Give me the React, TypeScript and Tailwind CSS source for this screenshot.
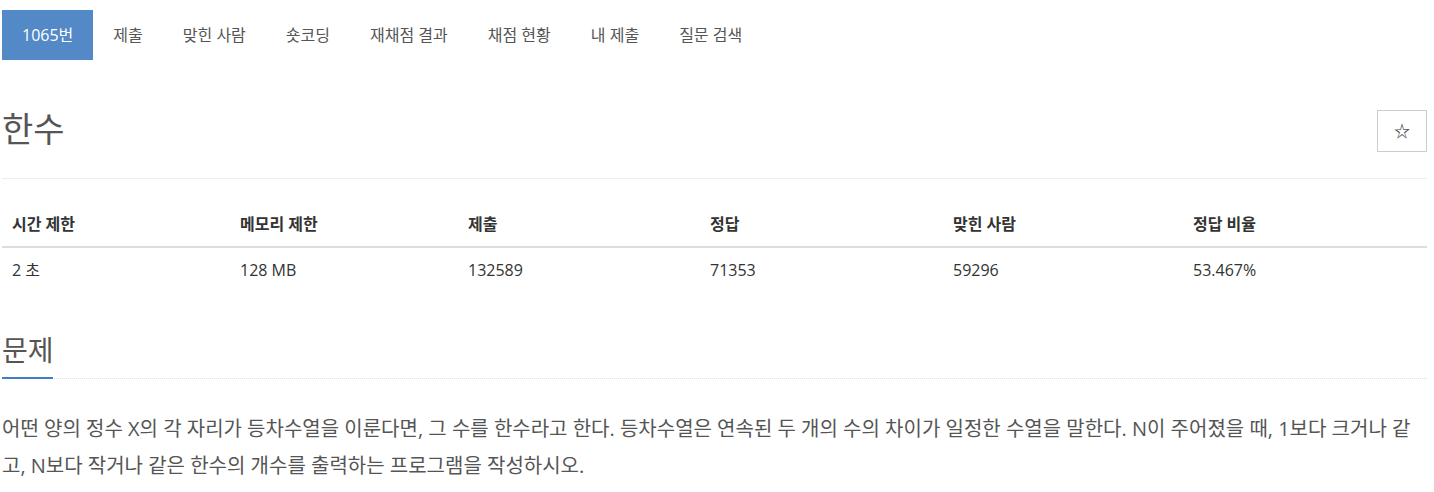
const tabs = ["제출", "맞힌 사람", "숏코딩", "재채점 결과", "채점 현황", "내 제출", "질문 검색"]

const headers = ["시간 제한", "메모리 제한", "제출", "정답", "맞힌 사람", "정답 비율"]
const values = ["2 초", "128 MB", "132589", "71353", "59296", "53.467%"]
const widths = ["w-[228px]", "w-[228px]", "w-[242px]", "w-[243px]", "w-[240px]", "flex-1"]

export default function App() {
  return (
    <div
      className="w-[1434px] h-[492px] bg-white overflow-hidden text-[#333]"
      style={{ fontFamily: '"Open Sans", "Noto Sans CJK KR", sans-serif' }}
    >
      <div className="w-[1425px] ml-[2px] pt-[10px]">
        {/* tabs */}
        <ul className="flex h-[50px] text-[16px] text-[#555]">
          <li className="h-full px-[20px] flex items-center bg-[#5289c6] text-white">1065번</li>
          {tabs.map((t) => (
            <li key={t} className="h-full px-[20px] flex items-center">
              {t}
            </li>
          ))}
        </ul>

        {/* title */}
        <div className="flex items-center justify-between mt-[50px] h-[42px]">
          <h1 className="text-[34px] font-normal text-[#555] leading-none -mt-[4px]">한수</h1>
          <button className="w-[50px] h-[42px] border border-[#ccc] flex items-center justify-center text-[#333] text-[16px]">
            ☆
          </button>
        </div>
        <div className="mt-[26px] border-t border-[#eee]" />

        {/* info table */}
        <div className="mt-[21px] text-[16px]">
          <div className="flex h-[48px] items-center border-b-2 border-[#ddd] font-bold">
            {headers.map((h, i) => (
              <div key={h} className={`${widths[i]} px-[10px] pt-[1px]`}>
                {h}
              </div>
            ))}
          </div>
          <div className="flex h-[44px] items-center">
            {values.map((v, i) => (
              <div key={i} className={`${widths[i]} px-[10px] -mt-[1px]`}>
                {v}
              </div>
            ))}
          </div>
        </div>

        {/* section */}
        <div className="mt-[44px] relative border-b border-dotted border-[#ddd]">
          <h2 className="text-[28px] font-normal text-[#555] leading-none pb-[14px]">문제</h2>
          <div className="absolute left-0 bottom-[-1px] w-[51px] h-[2px] bg-[#3e7ec1]" />
        </div>
        <p className="mt-[31px] text-[20px] leading-[37px] text-[#555] pr-[10px]">
          어떤 양의 정수 X의 각 자리가 등차수열을 이룬다면, 그 수를 한수라고 한다. 등차수열은 연속된 두 개의 수의 차이가 일정한 수열을 말한다. N이 주어졌을 때, 1보다 크거나 같고, N보다 작거나 같은 한수의 개수를 출력하는 프로그램을 작성하시오.
        </p>
      </div>
    </div>
  )
}
